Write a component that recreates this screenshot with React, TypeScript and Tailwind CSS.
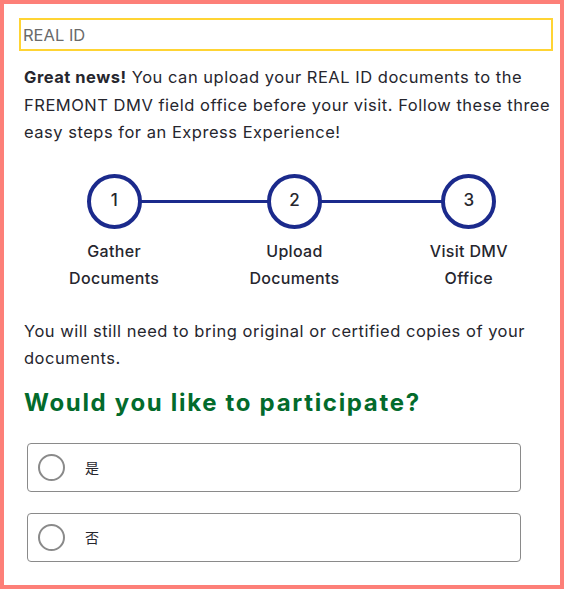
import React from 'react'

const steps = [
  { n: 1, label: ['Gather', 'Documents'] },
  { n: 2, label: ['Upload', 'Documents'] },
  { n: 3, label: ['Visit DMV', 'Office'] },
]

const options = ['是', '否']

export default function App() {
  return (
    <div
      className="w-[564px] h-[589px] border-4 border-[#fd7f78] bg-white overflow-hidden text-[#26262e]"
      style={{ fontFamily: 'Inter, "Noto Sans CJK SC", sans-serif' }}
    >
      <div className="pl-[15px] pr-[7px] pt-[14px]">
        <input
          type="text"
          placeholder="REAL ID"
          className="block w-full h-[33px] border-2 border-[#ffd434] px-[2px] text-[16.5px] outline-none placeholder:text-[#6a6a6a]"
        />

        <div className="pl-[5px]">
          <p className="mt-[13px] text-[16.5px] leading-[27.5px] tracking-[0.031em]">
            <b className="font-bold">Great news!</b> You can upload your REAL ID documents to the FREMONT DMV
            field office before your visit. Follow these three easy steps for an Express Experience!
          </p>

          <div className="relative mt-[27px] flex justify-around">
            <div className="absolute left-[90px] right-[85px] top-[26px] h-[3px] bg-[#1b2a8c]" />
            {steps.map(s => (
              <div key={s.n} className="relative flex flex-col items-center">
                <span className="w-[55px] h-[55px] rounded-full border-4 border-[#1b2a8c] bg-white flex items-center justify-center text-[17px] font-medium">
                  {s.n}
                </span>
                <span className="mt-[9px] text-[16px] leading-[27px] font-medium text-center tracking-[0.02em]">
                  {s.label[0]}
                  <br />
                  {s.label[1]}
                </span>
              </div>
            ))}
          </div>

          <p className="mt-[26px] text-[16.5px] leading-[27px] tracking-[0.031em]">
            You will still need to bring original or certified copies of your documents.
          </p>

          <h2 className="mt-[15px] text-[24px] leading-[32px] font-bold text-[#036b2c] tracking-[0.07em]">
            Would you like to participate?
          </h2>

          <div className="mt-[24px] ml-[3px] w-[494px] flex flex-col gap-[21px]">
            {options.map(o => (
              <label key={o} className="h-[49px] flex items-center border border-[#8a8a8a] rounded-[4px] pl-[10px]">
                <span className="w-[27px] h-[27px] rounded-full border-2 border-[#8a8a8a]" />
                <span className="ml-[20px] text-[14px]">{o}</span>
              </label>
            ))}
          </div>
        </div>
      </div>
    </div>
  )
}
